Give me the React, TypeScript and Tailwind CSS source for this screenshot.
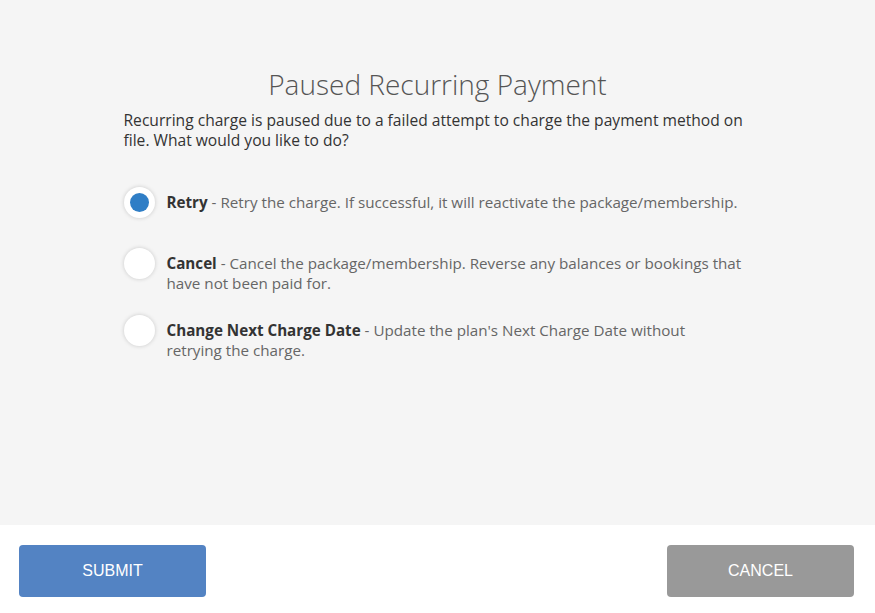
const options = [
  {
    id: "retry",
    label: "Retry",
    text: "Retry the charge. If successful, it will reactivate the package/membership.",
    gap: "mt-0",
  },
  {
    id: "cancel",
    label: "Cancel",
    text: "Cancel the package/membership. Reverse any balances or bookings that have not been paid for.",
    gap: "mt-[35px]",
  },
  {
    id: "change",
    label: "Change Next Charge Date",
    text: "Update the plan's Next Charge Date without retrying the charge.",
    gap: "mt-[27px]",
  },
];

export default function App() {
  const selected = "retry";

  return (
    <div className="w-[875px] h-[613px] flex flex-col bg-white font-['Open_Sans',sans-serif]">
      {/* body */}
      <div className="h-[525px] bg-[#f5f5f5] pt-[66px]">
        <div className="w-[628px] mx-auto">
          <h1 className="text-center text-[28px] leading-[36px] font-light text-[#555]">
            Paused Recurring Payment
          </h1>
          <p className="mt-[8px] text-[15.6px] leading-[20px] text-[#333]">
            Recurring charge is paused due to a failed attempt to charge the payment method on file. What would you like to do?
          </p>

          <div className="mt-[42px] flex flex-col">
            {options.map((o) => (
              <label key={o.id} className={`${o.gap} flex items-start gap-[12px] cursor-pointer`}>
                <span className="mt-[-5px] w-[31px] h-[31px] shrink-0 rounded-full bg-white shadow-[0_0_4px_rgba(0,0,0,0.18)] flex items-center justify-center">
                  {selected === o.id && <span className="w-[19px] h-[19px] rounded-full bg-[#2f7ec6]" />}
                </span>
                <span className="text-[15.2px] leading-[20px] text-[#666] pr-[10px]">
                  <b className="font-bold text-[#333]">{o.label}</b> - {o.text}
                </span>
              </label>
            ))}
          </div>
        </div>
      </div>

      {/* footer */}
      <div className="flex-1 flex items-start justify-between px-[19px] pt-[20px]">
        <button className="w-[187px] h-[52px] rounded-[4px] bg-[#5383c3] text-white text-[16px] uppercase font-['Liberation_Sans_Narrow','Liberation_Sans',sans-serif]">
          Submit
        </button>
        <button className="w-[187px] h-[52px] rounded-[4px] bg-[#999999] text-white text-[16px] uppercase mr-[2px] font-['Liberation_Sans_Narrow','Liberation_Sans',sans-serif]">
          Cancel
        </button>
      </div>
    </div>
  );
}
